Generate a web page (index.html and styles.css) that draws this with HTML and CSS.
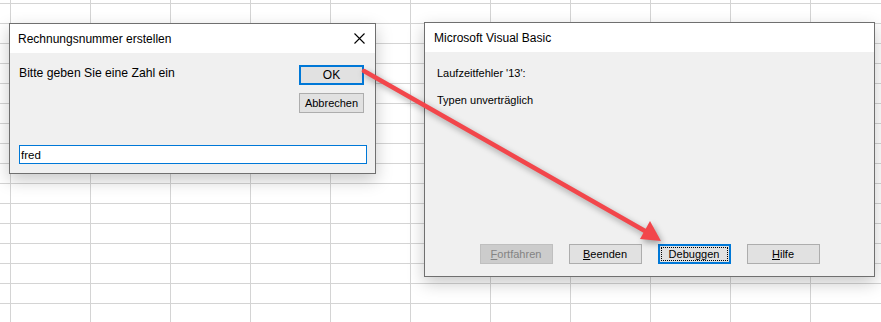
FILE: index.html
```html
<!DOCTYPE html>
<html lang="de">
<head>
  <meta charset="UTF-8">
  <title>Laufzeitfehler 13</title>
  <link rel="stylesheet" href="styles.css">
</head>
<body>
  <div class="sheet">
    <div class="dialog input-box">
      <div class="titlebar">
        <span class="title">Rechnungsnummer erstellen</span>
        <svg class="close" width="11" height="11" viewBox="0 0 11 11">
          <path d="M0.5 0.5 L10.5 10.5 M10.5 0.5 L0.5 10.5" stroke="#000" stroke-width="1.1" fill="none"/>
        </svg>
      </div>
      <div class="dialog-body">
        <div class="prompt-row">
          <p class="prompt">Bitte geben Sie eine Zahl ein</p>
          <div class="button-col">
            <button class="btn btn-default">OK</button>
            <button class="btn">Abbrechen</button>
          </div>
        </div>
        <div class="text-input">fred</div>
      </div>
    </div>

    <div class="dialog vb-box">
      <div class="titlebar">
        <span class="title">Microsoft Visual Basic</span>
      </div>
      <div class="dialog-body">
        <p class="msg">Laufzeitfehler '13':</p>
        <p class="msg">Typen unverträglich</p>
        <div class="button-row">
          <button class="btn btn-wide" disabled><u>F</u>ortfahren</button>
          <button class="btn btn-wide"><u>B</u>eenden</button>
          <button class="btn btn-wide btn-focus"><span class="focus-ring">Debu<u>g</u>gen</span></button>
          <button class="btn btn-wide"><u>H</u>ilfe</button>
        </div>
      </div>
    </div>

    <svg class="arrow" width="881" height="322" viewBox="0 0 881 322">
      <line x1="364" y1="71" x2="645" y2="231" stroke="#f2464b" stroke-width="4.5" stroke-linecap="round"/>
      <polygon points="661,241 640,239 650,221" fill="#f2464b"/>
    </svg>
  </div>
</body>
</html>
```

FILE: styles.css
```css
body {
  margin: 0;
  background: #fff;
  font-family: "Liberation Sans", Arial, sans-serif;
  font-size: 11px;
  color: #000;
}
.sheet {
  position: relative;
  width: 881px;
  height: 322px;
  overflow: hidden;
  background-color: #fff;
  background-image:
    linear-gradient(to right, #d4d4d4 1px, transparent 1px),
    linear-gradient(to bottom, #d4d4d4 1px, transparent 1px);
  background-size: 80px 20px;
  background-position: 10px 3px;
}

/* windows */
.dialog {
  position: absolute;
  box-sizing: border-box;
  display: flex;
  flex-direction: column;
  background: #f0f0f0;
  border: 1px solid #6f6f6f;
  box-shadow: 0 6px 16px rgba(0,0,0,0.22);
}
.input-box {
  left: 9px;
  top: 23px;
  width: 367px;
  height: 151px;
}
.vb-box {
  left: 424px;
  top: 22px;
  width: 451px;
  height: 255px;
}
.titlebar {
  height: 29px;
  flex: none;
  background: #fff;
  display: flex;
  align-items: center;
  justify-content: space-between;
  padding: 0 10px 0 8px;
}
.title {
  font-size: 12px;
  padding-top: 1px;
}
.vb-box .title {
  padding-left: 1px;
}

.dialog-body {
  flex: 1;
  display: flex;
  flex-direction: column;
}

/* input box */
.input-box .dialog-body {
  padding: 12px 8px 9px 9px;
}
.prompt-row {
  display: flex;
  justify-content: space-between;
  padding-right: 3px;
}
.prompt {
  margin: 1px 0 0;
  font-size: 12.2px;
}
.button-col {
  display: flex;
  flex-direction: column;
  gap: 8px;
}
.text-input {
  margin-top: auto;
  height: 19px;
  box-sizing: border-box;
  border: 1px solid #0078d7;
  background: #fff;
  padding: 2px 1px;
  font-size: 11.5px;
  line-height: 14px;
}

/* buttons */
.btn {
  box-sizing: border-box;
  width: 65px;
  height: 20px;
  padding: 0;
  background: #e1e1e1;
  border: 1px solid #adadad;
  border-radius: 0;
  font-family: "Liberation Sans", Arial, sans-serif;
  font-size: 11px;
  color: #000;
}
.btn-default {
  border: 2px solid #0078d7;
  font-size: 12px;
}
.btn-wide {
  width: 73px;
}
.btn:disabled {
  background: #cccccc;
  border-color: #bfbfbf;
  color: #838383;
}
.btn-focus {
  border: 2px solid #0078d7;
  padding: 1px;
}
.focus-ring {
  display: block;
  height: 100%;
  box-sizing: border-box;
  border: 1px dotted #000;
  line-height: 12px;
}

/* vb box */
.vb-box .dialog-body {
  padding: 14px 12px 12px 12px;
}
.msg {
  margin: 0 0 13px;
  line-height: 14px;
}
.button-row {
  margin-top: auto;
  display: flex;
  justify-content: center;
  gap: 16px;
}

.arrow {
  position: absolute;
  left: 0;
  top: 0;
  pointer-events: none;
  filter: drop-shadow(2px 3px 3px rgba(0,0,0,0.35));
}
```
